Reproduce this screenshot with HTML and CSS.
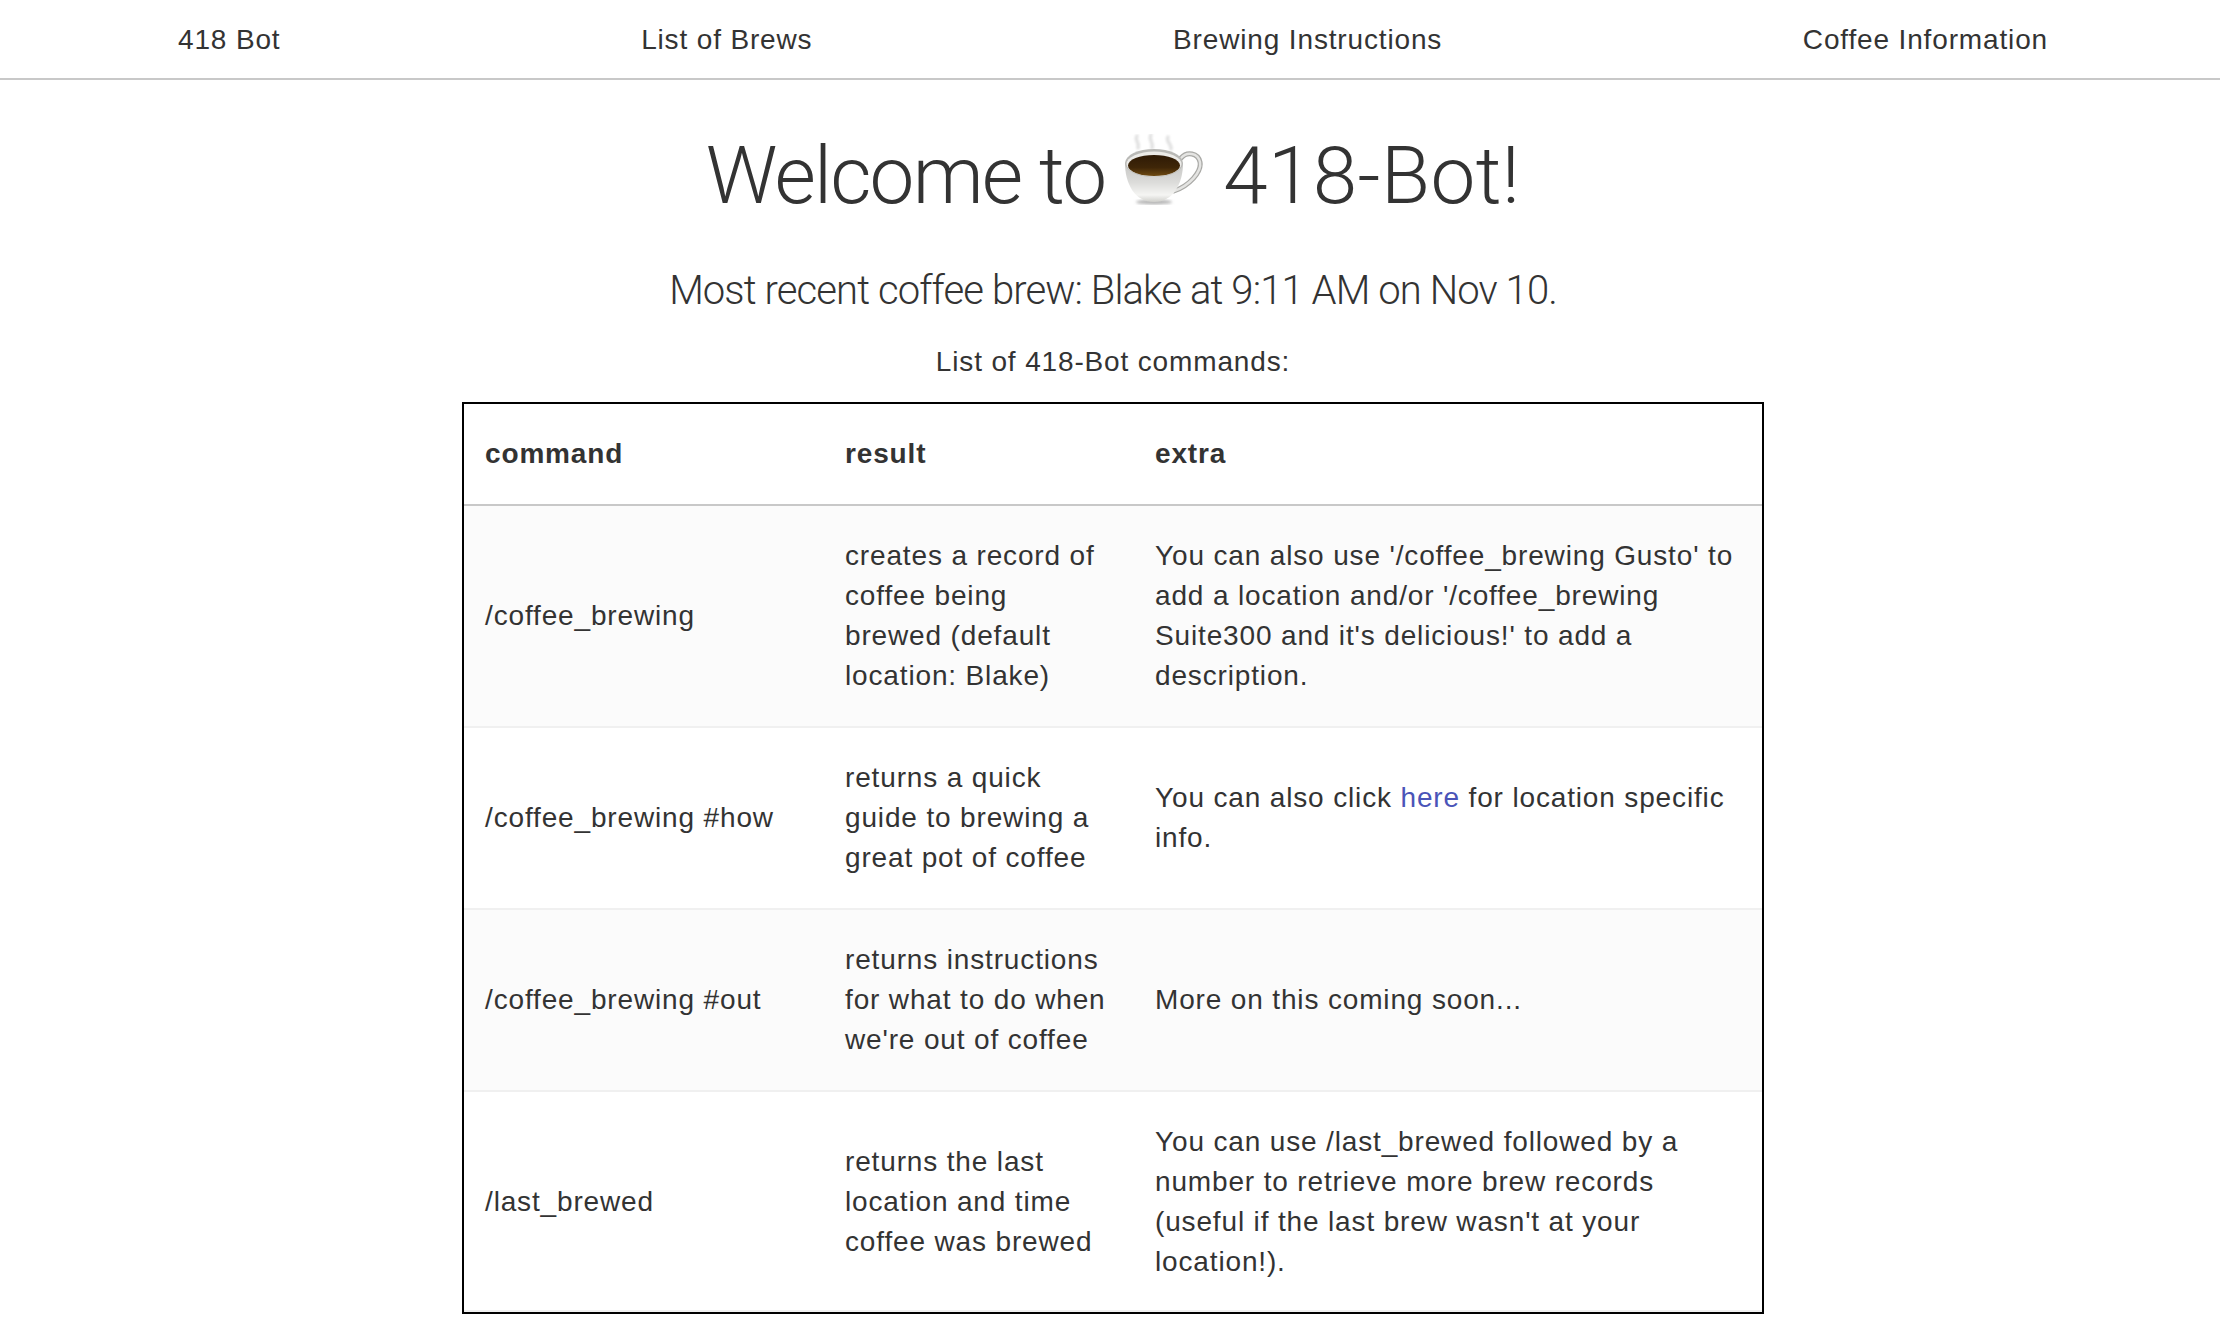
FILE: index.html
```html
<!DOCTYPE html>
<html lang="en">
<head>
    <meta charset="UTF-8">
    <meta name="viewport" content="width=device-width, initial-scale=1.0">
    <title>418 Bot</title>
    <link rel="stylesheet" href="styles.css">
</head>
<body>
    <nav class="nav">
        <a href="#">418 Bot</a>
        <a href="#">List of Brews</a>
        <a href="#">Brewing Instructions</a>
        <a href="#">Coffee Information</a>
    </nav>

    <main class="content">
        <h1 class="title">Welcome to
            <svg class="cup" viewBox="0 0 78 72" aria-hidden="true">
                <defs>
                    <linearGradient id="cup-body" x1="0" y1="0" x2="0" y2="1">
                        <stop offset="0" stop-color="#c6c6c4"/>
                        <stop offset="0.5" stop-color="#dcdcda"/>
                        <stop offset="0.82" stop-color="#f5f5f3"/>
                        <stop offset="1" stop-color="#cfcfcb"/>
                    </linearGradient>
                    <linearGradient id="cup-coffee" x1="0" y1="0" x2="0" y2="1">
                        <stop offset="0" stop-color="#2e1a06"/>
                        <stop offset="0.6" stop-color="#3f2608"/>
                        <stop offset="1" stop-color="#6e4a12"/>
                    </linearGradient>
                    <filter id="cup-blur"><feGaussianBlur stdDeviation="1.2"/></filter>
                    <filter id="cup-shadow"><feGaussianBlur stdDeviation="1.6"/></filter>
                </defs>
                <g fill="none" stroke="#e2e2e2" stroke-width="3.5" stroke-linecap="round" filter="url(#cup-blur)">
                    <path d="M12 2 C9 6 15 9 13 14"/>
                    <path d="M26 1 C23 5 29 9 27 14"/>
                    <path d="M43 3 C40 7 47 10 46 15"/>
                </g>
                <ellipse cx="29" cy="68" rx="18" ry="2.5" fill="#b5b5b5" filter="url(#cup-shadow)"/>
                <path d="M56 24 C62 17 73 19 75 28 C77 38 64 52 49 57" fill="none" stroke="#a9a9a6" stroke-width="5" stroke-linecap="round"/>
                <path d="M56 24 C62 17 73 19 75 28 C77 38 64 52 49 57" fill="none" stroke="#e4e4e2" stroke-width="2.5" stroke-linecap="round"/>
                <path d="M0 29 C0 50 10 68 29 68 C48 68 58 50 58 29 Z" fill="url(#cup-body)"/>
                <ellipse cx="29" cy="29" rx="29" ry="14" fill="#b9b9b6"/>
                <ellipse cx="29" cy="30" rx="27.5" ry="12.5" fill="#ecebe8"/>
                <ellipse cx="29" cy="31.5" rx="26" ry="10.5" fill="url(#cup-coffee)"/>
            </svg>
            <span class="title-name">418-Bot!</span></h1>
        <h2 class="recent">Most recent coffee brew: Blake at 9:11 AM on Nov 10.</h2>
        <p class="list-title">List of 418-Bot commands:</p>

        <table class="commands">
            <thead>
                <tr>
                    <th class="col-command">command</th>
                    <th class="col-result">result</th>
                    <th>extra</th>
                </tr>
            </thead>
            <tbody>
                <tr>
                    <td>/coffee_brewing</td>
                    <td class="cell-result">creates a record of coffee being brewed (default location: Blake)</td>
                    <td>You can also use '/coffee_brewing Gusto' to add a location and/or '/coffee_brewing Suite300 and it's delicious!' to add a description.</td>
                </tr>
                <tr>
                    <td>/coffee_brewing #how</td>
                    <td class="cell-result">returns a quick guide to brewing a great pot of coffee</td>
                    <td>You can also click <a href="#">here</a> for location specific info.</td>
                </tr>
                <tr>
                    <td>/coffee_brewing #out</td>
                    <td class="cell-result">returns instructions for what to do when we're out of coffee</td>
                    <td>More on this coming soon...</td>
                </tr>
                <tr>
                    <td>/last_brewed</td>
                    <td class="cell-result">returns the last location and time coffee was brewed</td>
                    <td>You can use /last_brewed followed by a number to retrieve more brew records (useful if the last brew wasn't at your location!).</td>
                </tr>
            </tbody>
        </table>
    </main>
</body>
</html>
```

FILE: styles.css
```css
* {
    margin: 0;
    padding: 0;
    box-sizing: border-box;
}

body {
    font-family: 'Liberation Sans', Arial, sans-serif;
    font-size: 28px;
    line-height: 40px;
    letter-spacing: 0.85px;
    color: #333;
    background-color: #fff;
}

.nav {
    display: flex;
    justify-content: space-between;
    align-items: center;
    height: 80px;
    padding: 2px 172px 0 178px;
    border-bottom: 2px solid #c8c8c8;
}

.nav a {
    color: #333;
    text-decoration: none;
}

.content {
    display: flex;
    flex-direction: column;
    align-items: center;
    padding-left: 6px;
}

.title {
    display: flex;
    align-items: center;
    gap: 20px;
    margin-top: 46px;
    font-family: Roboto, sans-serif;
    font-size: 80px;
    line-height: 100px;
    font-weight: 300;
    letter-spacing: -1.8px;
}

.title-name {
    letter-spacing: 0.4px;
}

.cup {
    width: 78px;
    height: 72px;
    margin-bottom: 12px;
}

.recent {
    margin-top: 37px;
    font-family: Roboto, sans-serif;
    font-size: 40px;
    line-height: 56px;
    font-weight: 300;
    letter-spacing: -0.9px;
}

.list-title {
    margin-top: 23px;
}

.commands {
    width: 1302px;
    margin-top: 20px;
    border: 2px solid #000;
    border-collapse: separate;
    border-spacing: 0;
    table-layout: fixed;
}

.commands th,
.commands td {
    padding: 30px 21px;
    text-align: left;
    vertical-align: middle;
}

.commands th {
    border-bottom: 2px solid #c8c8c8;
}

.col-command {
    width: 360px;
}

.col-result {
    width: 310px;
}

.commands td {
    border-bottom: 2px solid #f0f0f0;
}

.commands td.cell-result {
    padding-right: 24px;
}

.commands tbody tr:nth-child(odd) {
    background-color: #fbfbfb;
}

.commands tbody tr:last-child td {
    padding-bottom: 28px;
}

.commands a {
    color: #4a54b8;
    text-decoration: none;
}
```
